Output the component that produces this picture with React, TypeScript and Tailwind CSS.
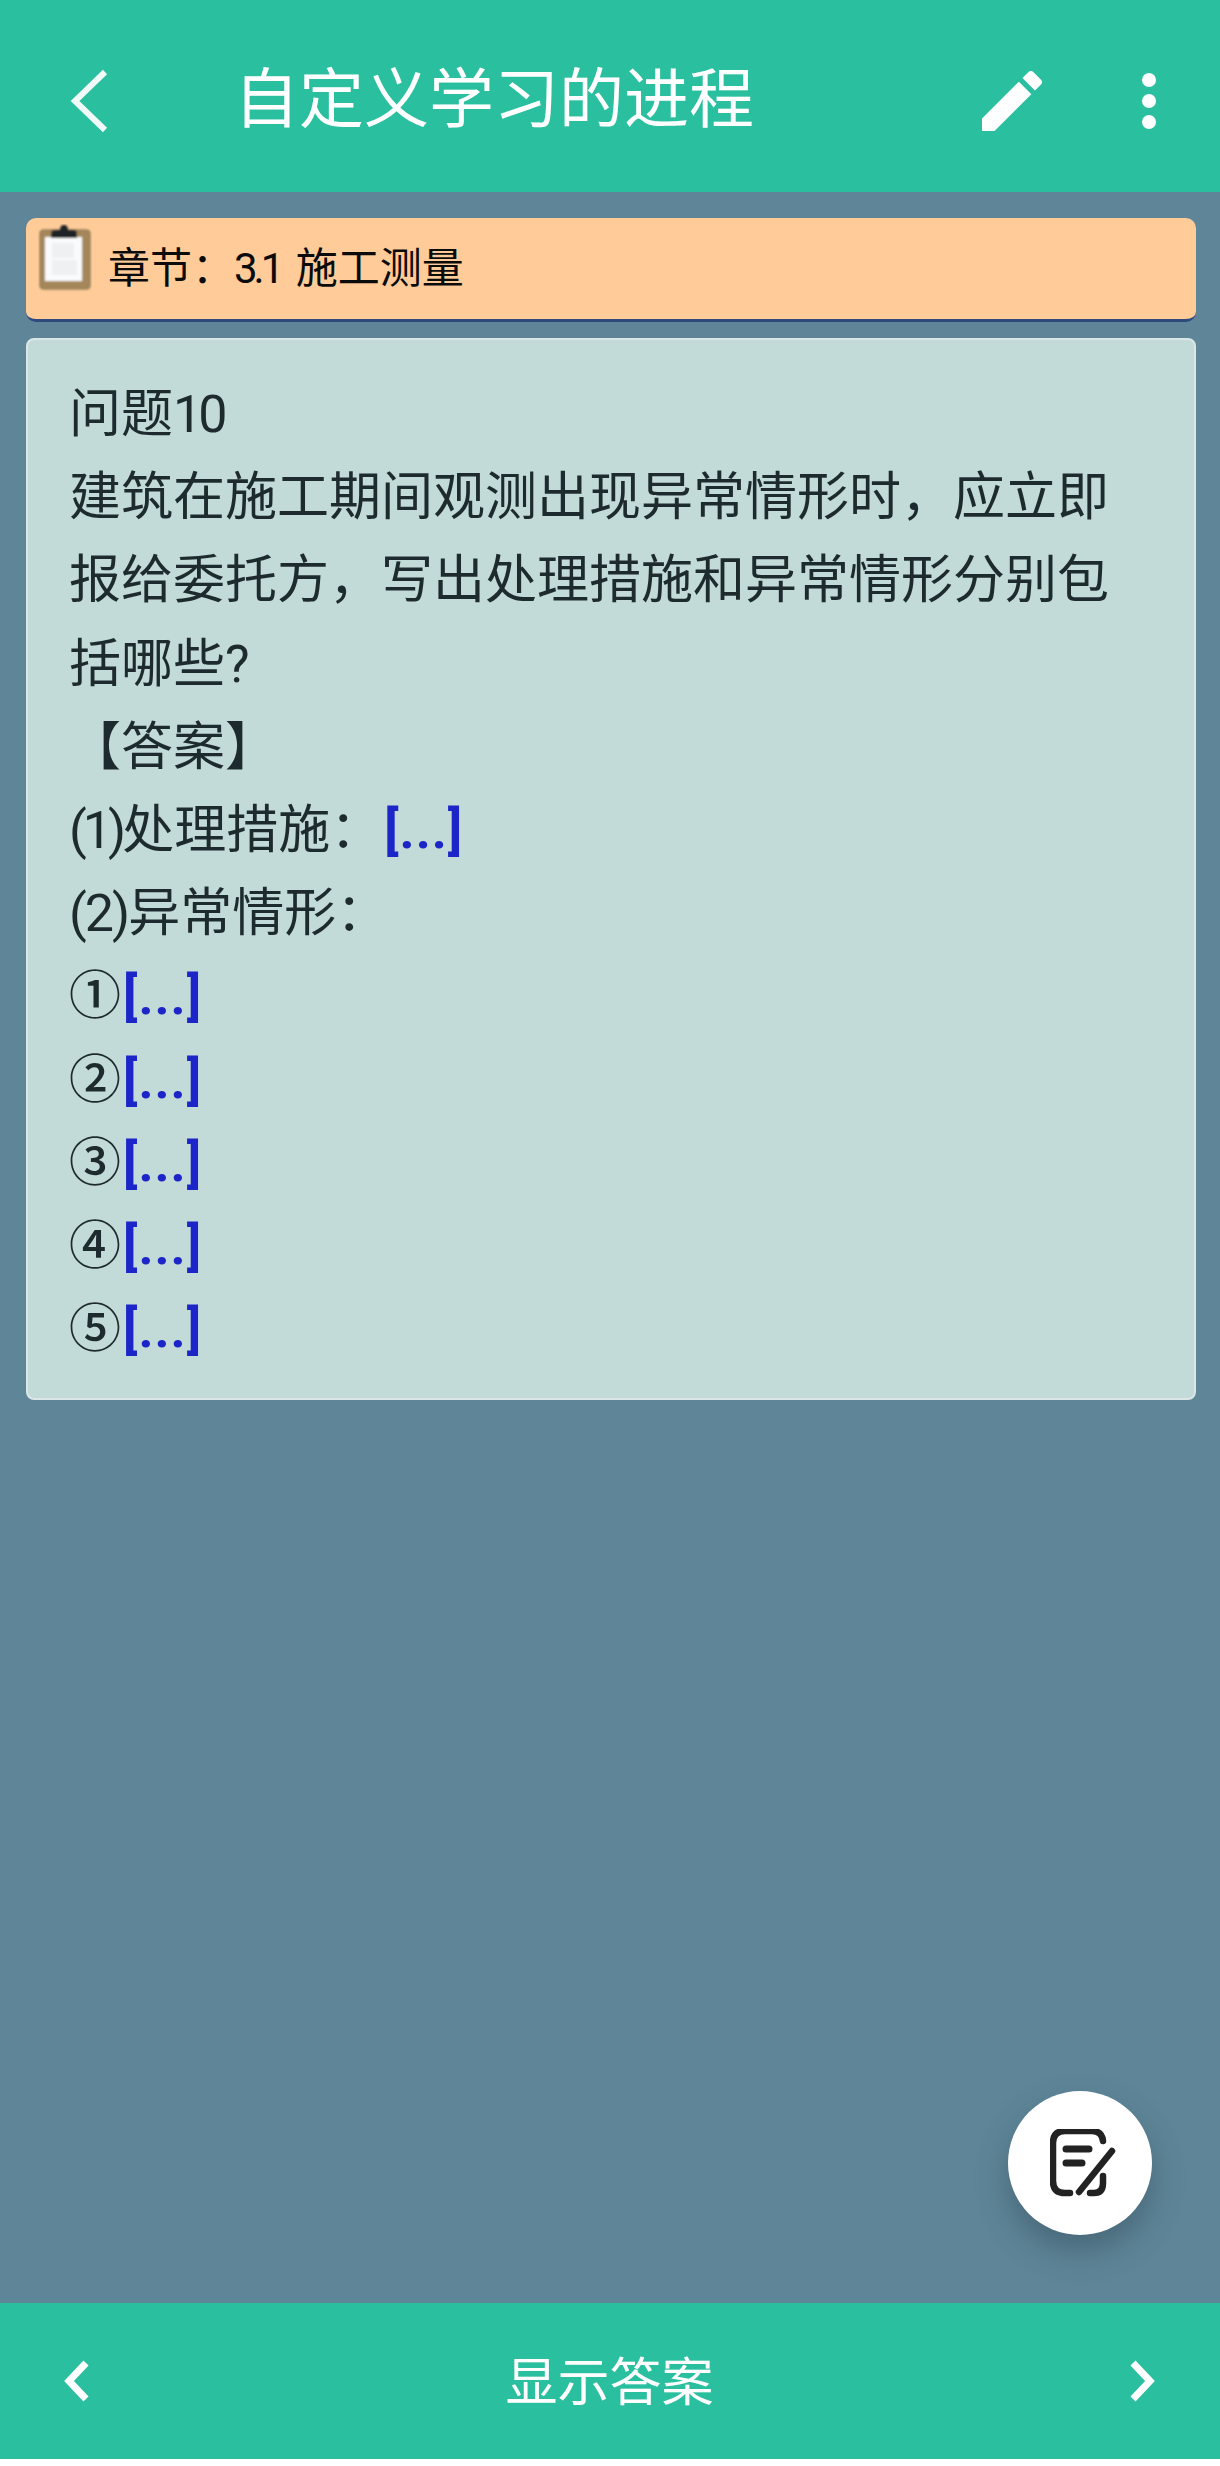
const font = { fontFamily: '"Roboto", "Noto Sans CJK SC", sans-serif' };

const Blank = () => <span className="ml-[2px] font-bold tracking-[1px] text-[#1c25c8]">[...]</span>;

const ClipboardIcon = () => (
    <svg width="54" height="68" viewBox="0 0 54 68" className="shrink-0">
        <defs>
            <filter id="soft"><feGaussianBlur stdDeviation="0.9" /></filter>
        </defs>
        <g filter="url(#soft)">
            <rect x="2" y="6" width="50" height="59" rx="3" fill="#a5875a" stroke="#7d6a4c" strokeWidth="1" />
            <rect x="7" y="13" width="37" height="44" fill="#fafbfd" />
            <rect x="14" y="19" width="22" height="15" fill="#eef0f2" />
            <rect x="14" y="36" width="25" height="15" fill="#eef0f2" />
            <path d="M13 14 L13 9 Q13 6 18 6 L22 6 Q22 1 26 1 Q30 1 30 6 L35 6 Q39 6 39 9 L39 14 Z" fill="#1d2126" />
        </g>
    </svg>
);

const Circled = ({ n }: { n: string }) => <span className="font-medium">{n}</span>;

export default function App() {
    return (
        <div style={font} className="relative flex h-[2466px] w-[1220px] flex-col overflow-hidden bg-white">
            <header className="flex h-[192px] shrink-0 items-center bg-[#2abf9f] pt-[9px] text-white">
                <svg width="44" height="66" viewBox="0 0 44 66" className="ml-[69px] shrink-0">
                    <path d="M36 4 L6 33 L36 62" fill="none" stroke="#f1faf7" strokeWidth="6" />
                </svg>
                <h1 className="ml-[121px] text-[65px] leading-none font-normal whitespace-nowrap">自定义学习的进程</h1>
                <svg width="60" height="60" viewBox="3 3 18 18" className="ml-[228px] shrink-0" fill="#fff">
                    <path d="M3 17.25V21h3.75L17.81 9.94l-3.75-3.75L3 17.25zM20.71 7.04a1 1 0 0 0 0-1.41l-2.34-2.34a1 1 0 0 0-1.41 0l-1.83 1.83 3.75 3.75 1.83-1.83z" />
                </svg>
                <div className="ml-[100px] flex flex-col gap-[7px]">
                    <span className="h-[14px] w-[14px] rounded-full bg-white" />
                    <span className="h-[14px] w-[14px] rounded-full bg-white" />
                    <span className="h-[14px] w-[14px] rounded-full bg-white" />
                </div>
            </header>

            <main className="flex flex-1 flex-col gap-[16px] bg-[#5e8698] pt-[26px] pr-[24px] pl-[26px]">
                <div className="flex h-[104px] items-start rounded-[10px] border-b-[3px] border-[#2e4a7d] bg-[#ffcc99] pt-[6px] pl-[12px]">
                    <ClipboardIcon />
                    <span className="mt-[17px] ml-[16px] text-[42px] leading-[56px] text-[#0b0b0b]">
                        章节：<span className="mr-[5px] tracking-[-4px]">3.1</span> 施工测量
                    </span>
                </div>

                <div className="h-[1062px] rounded-[8px] border-2 border-[#dbe6e6] bg-[#c2dad8] px-[41px] pt-[33px] text-[52px] leading-[83.2px] text-[#1d2a2e]">
                    <p>问题<span className="tracking-[-4px]">10</span></p>
                    <p>建筑在施工期间观测出现异常情形时，应立即报给委托方，写出处理措施和异常情形分别包括哪些?</p>
                    <p>【答案】</p>
                    <p><span className="tracking-[-4px]">(1)</span>处理措施：<Blank /></p>
                    <p><span className="tracking-[-2px]">(2)</span>异常情形：</p>
                    <p><Circled n="①" /><Blank /></p>
                    <p><Circled n="②" /><Blank /></p>
                    <p><Circled n="③" /><Blank /></p>
                    <p><Circled n="④" /><Blank /></p>
                    <p><Circled n="⑤" /><Blank /></p>
                </div>
            </main>

            <footer className="mb-[7px] flex h-[156px] shrink-0 items-center justify-between bg-[#2abf9f] pr-[65px] pl-[64px] text-white">
                <svg width="26" height="42" viewBox="0 0 26 42">
                    <path d="M22 3 L5 21 L22 39" fill="none" stroke="#fff" strokeWidth="7" />
                </svg>
                <span className="pt-[5px] text-[52px] leading-none">显示答案</span>
                <svg width="26" height="42" viewBox="0 0 26 42">
                    <path d="M4 3 L21 21 L4 39" fill="none" stroke="#fff" strokeWidth="7" />
                </svg>
            </footer>

            <button className="absolute top-[2091px] left-[1008px] flex h-[144px] w-[144px] items-center justify-center rounded-full bg-white pl-[5px] shadow-[0_16px_32px_rgba(40,60,75,0.4)]">
                <svg width="66" height="68" viewBox="0 0 66 68" fill="none" stroke="#222" strokeLinecap="round">
                    <path d="M53 12 Q52 2 42 2 L15 2 Q3 2 3 14 L3 52 Q3 64 15 64 L20 64" strokeWidth="6.5" />
                    <path d="M40 64 L44 64 Q53 64 53 54 L53 47" strokeWidth="6.5" />
                    <path d="M16 20 L39 20 M16 34 L32 34" strokeWidth="7" />
                    <path d="M29 63 L62 22" strokeWidth="6.5" />
                </svg>
            </button>
        </div>
    );
}
